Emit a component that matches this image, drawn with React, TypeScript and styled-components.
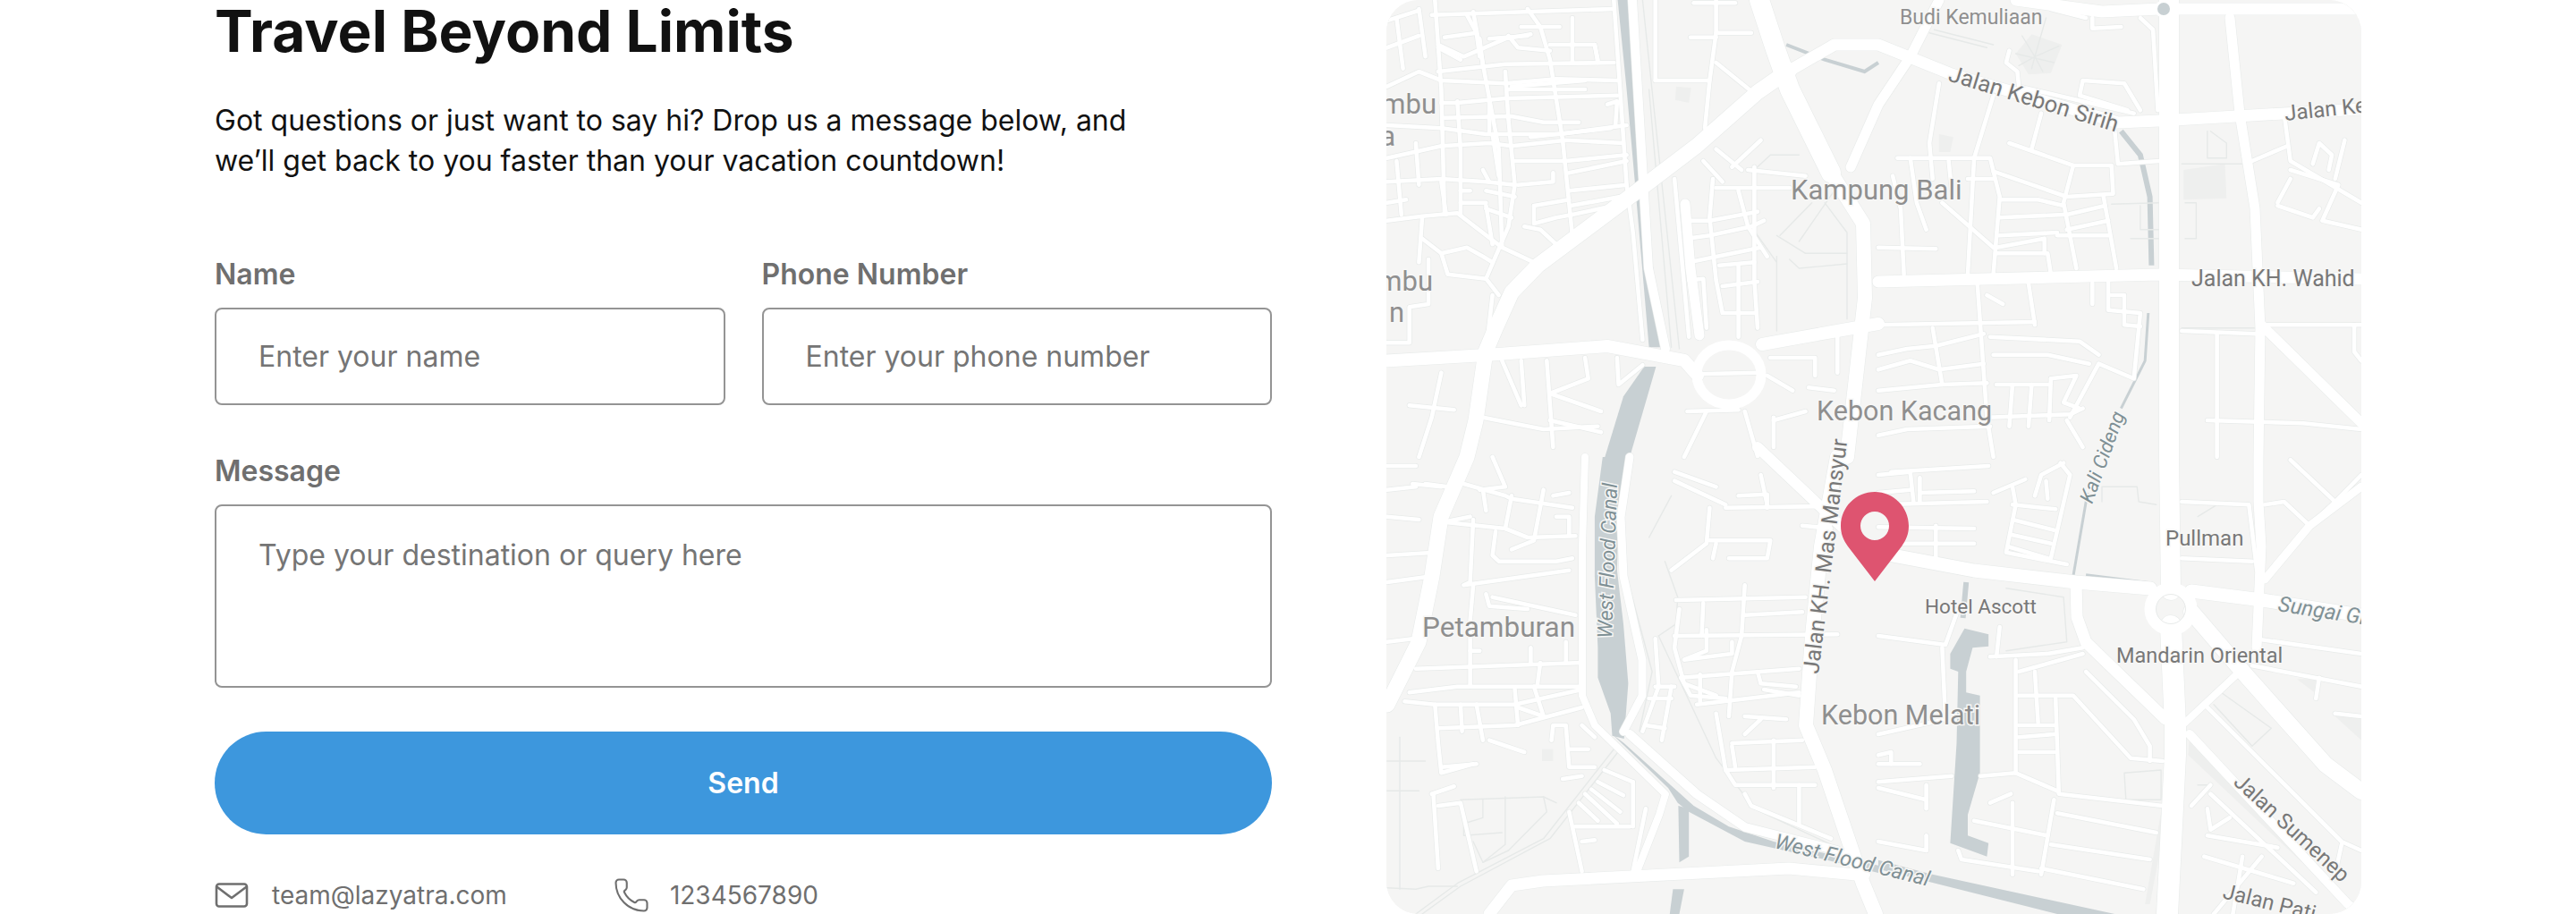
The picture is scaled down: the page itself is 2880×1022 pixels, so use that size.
import React from 'react';
import styled, { createGlobalStyle } from 'styled-components';
import { Phone } from 'lucide-react';

const GlobalStyle = createGlobalStyle`
  html, body {
    margin: 0;
    padding: 0;
    background: #ffffff;
    overflow: hidden;
  }
  * {
    box-sizing: border-box;
  }
`;

const Page = styled.main`
  width: 2880px;
  height: 1022px;
  padding-left: 240px;
  display: grid;
  grid-template-columns: 1182px 1090px;
  column-gap: 128px;
  font-family: Inter, 'Liberation Sans', sans-serif;
`;

const FormColumn = styled.section`
  padding-top: 3px;
  display: flex;
  flex-direction: column;
`;

const Title = styled.h1`
  margin: 0;
  font-size: 64px;
  line-height: 64px;
  font-weight: 700;
  color: #111111;
`;

const Intro = styled.p`
  margin: 45px 0 0;
  font-size: 32px;
  line-height: 45px;
  font-weight: 400;
  color: #111111;
`;

const NameRow = styled.div`
  margin-top: 85px;
  display: grid;
  grid-template-columns: 1fr 1fr;
  column-gap: 41px;
`;

const Field = styled.label<{ $gap?: number }>`
  display: flex;
  flex-direction: column;
  row-gap: 17px;
  margin-top: ${(p) => p.$gap ?? 0}px;
`;

const FieldLabel = styled.span`
  font-size: 32px;
  line-height: 40px;
  font-weight: 600;
  color: #6f6f6f;
`;

const TextInput = styled.input`
  width: 100%;
  height: 109px;
  padding: 0 47px;
  border: 2px solid #949494;
  border-radius: 8px;
  background: #ffffff;
  font: 400 32px Inter, 'Liberation Sans', sans-serif;
  &::placeholder {
    color: #757575;
    opacity: 1;
  }
`;

const MessageInput = styled.textarea`
  display: block;
  width: 100%;
  height: 205px;
  padding: 35px 47px;
  border: 2px solid #949494;
  border-radius: 8px;
  background: #ffffff;
  resize: none;
  font: 400 32px/40px Inter, 'Liberation Sans', sans-serif;
  &::placeholder {
    color: #757575;
    opacity: 1;
  }
`;

const SendButton = styled.button`
  margin-top: 49px;
  height: 115px;
  border: 0;
  border-radius: 58px;
  background: #3d97dd;
  color: #ffffff;
  font: 600 32px Inter, 'Liberation Sans', sans-serif;
`;

const ContactRow = styled.div`
  margin-top: 50px;
  display: flex;
  align-items: center;
  column-gap: 118px;
  color: #6f6f6f;
`;

const ContactItem = styled.div<{ $gap: number }>`
  display: flex;
  align-items: center;
  column-gap: ${(p) => p.$gap}px;
  height: 36px;
  font-size: 28px;
  line-height: 36px;
`;

const MailGlyph = styled.svg`
  width: 38px;
  height: 28px;
  flex: none;
`;

const MapFrame = styled.section`
  position: relative;
  width: 1090px;
  height: 1022px;
  border-radius: 36px;
  overflow: hidden;
  background: #f5f5f4;
`;

const MapCanvas = styled.svg`
  display: block;
  width: 1090px;
  height: 1022px;
`;

const MapLabel = styled.text<{ $tone: string; $italic?: boolean }>`
  font-family: Roboto, 'Noto Sans', sans-serif;
  fill: ${(p) => p.$tone};
  font-style: ${(p) => (p.$italic ? 'italic' : 'normal')};
  stroke: #f7f7f6;
  stroke-width: 3px;
  paint-order: stroke;
`;

const PinMark = styled.svg`
  position: absolute;
  left: 508px;
  top: 550px;
  width: 76px;
  height: 100px;
`;

type PanelKey = 'a' | 'b' | 'c' | 'd';

// road data is read off four quarter crops of the map, so each list keeps its crop's scale
const panels: Record<PanelKey, [number, number]> = {
  a: [1540, 0],
  b: [2100, 0],
  c: [1540, 511],
  d: [2100, 511],
};

const project = (panel: PanelKey, pts: number[]) => {
  const [ox, oy] = panels[panel];
  const out: string[] = [];
  for (let i = 0; i < pts.length; i += 2) {
    out.push(`${(ox + pts[i] / 2.8).toFixed(1)},${(oy + pts[i + 1] / 3).toFixed(1)}`);
  }
  return out;
};

const toPath = (panel: PanelKey, pts: number[]) => 'M' + project(panel, pts).join('L');
const pagePath = (pts: number[]) => {
  const out: string[] = [];
  for (let i = 0; i < pts.length; i += 2) out.push(`${pts[i]},${pts[i + 1]}`);
  return 'M' + out.join('L');
};

const water: [PanelKey, number[]][] = [
  ['a', [752, 0, 790, 0, 815, 300, 838, 600, 885, 1165, 850, 1165, 805, 600, 780, 300]],
  ['a', [835, 1230, 872, 1230, 845, 1330, 790, 1533, 712, 1533, 770, 1330]],
  ['c', [705, 0, 782, 0, 755, 190, 750, 380, 770, 560, 785, 760, 772, 945, 735, 935, 730, 860, 690, 740, 690, 640, 680, 400, 680, 200]],
  ['c', [735, 930, 772, 960, 990, 1170, 1100, 1240, 1240, 1290, 1568, 1370, 1568, 1395, 1400, 1350, 1150, 1290, 975, 1190, 940, 1160, 910, 1110]],
  ['c', [942, 1170, 975, 1180, 975, 1340, 945, 1360]],
  ['c', [925, 1450, 960, 1450, 945, 1533, 915, 1533]],
  ['d', [0, 1352, 160, 1398, 740, 1533, 560, 1533, 0, 1382]],
  ['d', [270, 575, 345, 595, 345, 635, 295, 640, 275, 720, 275, 790, 318, 800, 318, 1060, 280, 1200, 280, 1270, 345, 1295, 340, 1340, 225, 1295, 245, 960, 250, 720, 225, 710, 225, 660]],
];

const streams: [PanelKey, number, number[]][] = [
  ['b', 6, [760, 440, 820, 520, 850, 660, 855, 890]],
  ['b', 3, [845, 1050, 835, 1210, 760, 1370]],
  ['d', 3, [655, 120, 610, 400]],
  ['a', 4, [1280, 150, 1400, 200, 1525, 240, 1568, 210]],
  ['d', 3, [650, 395, 850, 422]],
  ['d', 3, [1000, 458, 1180, 482]],
  ['d', 6, [275, 420, 265, 540]],
];

const shades: [PanelKey, number[]][] = [
  ['a', [935, 290, 982, 295, 975, 345, 932, 335]],
  ['b', [955, 570, 1085, 550, 1090, 665, 955, 670]],
  ['b', [430, 180, 480, 115, 575, 150, 540, 245, 470, 250]],
  ['b', [190, 450, 235, 460, 225, 510, 190, 510]],
  ['c', [515, 980, 550, 980, 550, 1020, 515, 1020]],
  ['d', [1310, 745, 1370, 745, 1365, 790]],
  ['d', [1430, 870, 1512, 870, 1512, 950]],
  ['d', [975, 935, 1470, 1480, 1475, 1510, 970, 1000]],
  ['d', [885, 1190, 905, 1190, 850, 1500, 835, 1500]],
];

// [width, ...x,y in page pixels]
const majors: number[][] = [
  [17, 2001, 78, 1965, 103, 1897, 163, 1826, 217, 1719, 297, 1690, 327, 1672, 367, 1661, 393, 1650, 470, 1640, 511, 1611, 578, 1601, 644, 1586, 718, 1551, 788],
  [14, 1540, 404, 1661, 397, 1797, 387, 1883, 403, 1898, 420],
  [14, 1970, 385, 2054, 370, 2100, 362],
  [22, 1967, 0, 1985, 55, 2001, 100, 2047, 193],
  [16, 2047, 193, 2083, 250, 2085, 333, 2065, 511, 2054, 511, 2036, 611, 2026, 711, 2019, 811, 2040, 861, 2083, 988, 2097, 1022],
  [13, 2004, 77, 2051, 50, 2100, 50, 2182, 83, 2368, 137, 2414, 135, 2500, 130, 2640, 122],
  [11, 2168, 0, 2136, 63, 2100, 117, 2069, 187],
  [13, 2254, 0, 2350, 13, 2414, 10, 2640, 10],
  [22, 2425, 0, 2425, 511, 2427, 660],
  [24, 2427, 700, 2432, 811, 2432, 844, 2423, 1022],
  [11, 2493, 20, 2504, 127, 2521, 233, 2527, 367, 2525, 511, 2525, 561, 2528, 611, 2523, 724],
  [13, 2100, 315, 2414, 307, 2640, 312],
  [11, 2528, 363, 2640, 473],
  [15, 2100, 618, 2207, 638, 2321, 651, 2404, 658],
  [15, 2450, 661, 2529, 671, 2640, 688],
  [12, 1965, 500, 2058, 588, 2100, 618],
  [13, 2321, 651, 2322, 690, 2332, 718, 2421, 804],
  [18, 2450, 684, 2510, 754, 2600, 855, 2640, 885],
  [8, 2504, 751, 2443, 808],
  [9, 2532, 648, 2582, 588, 2640, 544],
  [10, 2448, 821, 2625, 1011, 2640, 1022],
  [13, 1665, 1022, 1690, 990, 1725, 985, 2000, 971, 2075, 978],
  [8, 1772, 511, 1769, 611, 1769, 778, 1783, 811, 1862, 888, 1855, 911, 1830, 975],
  [9, 1822, 511, 1812, 578, 1815, 644, 1836, 738, 1836, 778, 1815, 818],
  [10, 1822, 821, 1897, 888, 1951, 925, 2054, 951, 2086, 978],
  [10, 1825, 0, 1843, 300, 1862, 390],
  [11, 1884, 228, 1890, 300, 1900, 375],
];

const minors: [PanelKey, number[][]][] = [
  ['a', [
    [28, 70, 130, 35], [170, 50, 740, 30], [190, 240, 400, 215, 740, 210], [30, 290, 130, 240, 200, 270, 400, 280, 560, 265, 750, 270],
    [410, 300, 650, 300], [250, 345, 400, 330, 750, 320], [30, 420, 200, 430, 340, 450, 570, 450, 780, 420], [210, 395, 420, 390, 520, 410, 630, 410],
    [30, 530, 200, 490, 350, 480, 420, 490, 590, 470, 770, 480], [430, 540, 590, 540, 780, 520], [600, 580, 780, 540], [440, 620, 550, 610, 550, 580],
    [30, 610, 200, 600, 340, 610, 430, 620], [600, 640, 780, 620], [605, 690, 760, 660], [490, 690, 600, 670], [610, 720, 740, 690],
    [30, 740, 140, 725, 250, 715, 390, 830, 490, 880], [200, 850, 280, 830, 330, 860, 360, 880], [140, 800, 200, 850, 220, 920, 340, 935, 380, 990],
    [490, 690, 490, 750, 560, 730, 610, 720], [460, 760, 510, 770, 560, 820], [180, 0, 200, 300, 210, 720], [300, 40, 350, 330, 380, 500, 390, 830],
    [400, 240, 410, 400, 430, 620, 410, 760, 340, 935], [470, 30, 510, 90, 540, 200, 580, 470, 610, 790], [740, 0, 780, 620, 800, 780, 830, 1140],
    [120, 480, 130, 620], [60, 540, 75, 720], [60, 60, 80, 230], [250, 340, 260, 500, 260, 720], [130, 30, 150, 190], [140, 730, 130, 880],
    [30, 160, 130, 120], [190, 150, 270, 190, 400, 130, 480, 115], [320, 130, 330, 220], [610, 60, 610, 205], [680, 150, 690, 210], [190, 160, 260, 200],
    [210, 125, 310, 110], [280, 50, 310, 110, 320, 190], [350, 130, 470, 120], [410, 120, 440, 160, 540, 170], [540, 150, 680, 150, 690, 200], [450, 90, 570, 90], [420, 290, 650, 270], [200, 345, 250, 345],
    [350, 340, 350, 440], [480, 460, 730, 430], [720, 350, 750, 340, 745, 420], [360, 450, 380, 590], [330, 570, 350, 610], [30, 680, 90, 670], [200, 610, 215, 720], [260, 640, 290, 640], [340, 640, 430, 660],
    [340, 700, 420, 730], [260, 680, 340, 680], [340, 690, 360, 820], [360, 990, 340, 1180], [30, 1150, 100, 1150, 100, 1030, 160, 1020, 160, 870],
    [870, 270, 1040, 270, 1060, 110, 1170, 110], [870, 0, 870, 270], [1040, 270, 1025, 430], [1060, 210, 1175, 310], [980, 125, 1060, 125], [990, 10, 1120, 10], [1060, 0, 1060, 110],
    [930, 600, 975, 1130], [960, 740, 1040, 740, 1190, 710], [970, 800, 1040, 790, 1170, 760, 1210, 740], [975, 880, 1200, 830], [1050, 600, 1040, 730, 1060, 940, 1080, 1050, 1180, 1050],
    [1130, 640, 1160, 760, 1220, 860], [1020, 540, 1080, 610], [1060, 500, 1140, 570], [1110, 560, 1200, 470], [1180, 560, 1180, 940, 1190, 1100], [1080, 960, 1190, 945],
    [975, 940, 1020, 935, 1030, 1100], [1130, 890, 1130, 1130], [1070, 890, 1180, 880], [1160, 570, 1340, 590], [1060, 630, 1290, 630], [1000, 1255, 1190, 1250],
    [390, 1210, 450, 1360], [450, 1210, 460, 1360], [530, 1210, 550, 1500], [650, 1200, 660, 1270, 540, 1320, 700, 1380], [750, 1200, 755, 1290, 830, 1225], [330, 1400, 520, 1440, 690, 1430],
    [100, 1360, 240, 1375], [540, 1410, 700, 1450], [970, 1380, 1130, 1375], [1150, 1380, 1190, 1530], [1230, 1200, 1370, 1200, 1370, 1260], [1220, 1260, 1300, 1310],
    [1350, 1300, 1430, 1310], [1240, 1400, 1240, 1500], [1030, 1380, 960, 1533], [1440, 1130, 1440, 1250], [200, 1250, 170, 1400, 130, 1533], [1240, 1410, 1340, 1380],
  ]],
  ['b', [
    [190, 280, 160, 480, 170, 600], [360, 320, 300, 530, 280, 920], [510, 380, 480, 500], [410, 480, 610, 555, 730, 555, 735, 650, 590, 660, 360, 575], [610, 555, 580, 680, 620, 900],
    [705, 660, 745, 900], [590, 720, 710, 690], [590, 770, 720, 740], [560, 790, 720, 790], [60, 530, 350, 530, 380, 660, 360, 920], [45, 590, 70, 700, 80, 920], [100, 530, 120, 680, 150, 770],
    [220, 540, 230, 640], [280, 600, 360, 600], [380, 670, 500, 670, 580, 690], [380, 730, 580, 720], [380, 790, 560, 780], [370, 850, 530, 850, 540, 920], [370, 830, 520, 800, 520, 850],
    [200, 680, 360, 830], [0, 830, 180, 835], [310, 950, 340, 1400, 360, 1533], [0, 1090, 490, 1080], [470, 950, 490, 1090], [720, 940, 720, 1040, 820, 1050, 800, 1270, 690, 1220, 600, 1400],
    [350, 1130, 630, 1145, 690, 1190], [360, 1190, 530, 1190, 660, 1220], [0, 1190, 90, 1170, 180, 1160, 330, 1120], [0, 1240, 100, 1210, 190, 1240, 330, 1220], [0, 1310, 200, 1290, 340, 1285],
    [200, 1290, 170, 1100], [540, 1270, 620, 1260, 580, 1350, 630, 1370], [420, 1290, 410, 1430], [480, 1290, 470, 1430], [540, 1270, 535, 1410], [340, 1400, 600, 1390, 640, 1370],
    [0, 1460, 90, 1440, 350, 1430], [370, 1290, 530, 1290], [590, 1410, 640, 1500], [670, 950, 670, 1020],
    [950, 1110, 1180, 1120], [1060, 1120, 1060, 1533], [1210, 1090, 1512, 1090], [1030, 1410, 1330, 1420, 1512, 1440], [1270, 380, 1290, 540, 1512, 680], [1290, 570, 1440, 620, 1390, 740, 1512, 770],
    [1170, 540, 1280, 490], [1360, 550, 1380, 480, 1420, 520, 1410, 570], [1460, 470, 1430, 600], [1250, 680, 1290, 600], [1250, 690, 1360, 730, 1380, 700], [1490, 1090, 1490, 1180, 1512, 1210],
    [540, 30, 650, 60], [670, 60, 670, 95, 760, 90], [820, 60, 860, 100, 875, 370], [780, 370, 630, 320, 640, 270, 770, 280, 820, 370], [410, 170, 400, 210, 435, 240, 440, 290, 800, 380],
    [740, 440, 750, 550, 880, 540], [340, 990, 390, 1020], [730, 990, 770, 990, 770, 1090, 820, 1095],
  ]],
  ['c', [
    [120, 100, 30, 110], [270, 90, 400, 130, 420, 140, 610, 170], [360, 0, 400, 100, 320, 110], [220, 220, 400, 240, 470, 270, 620, 265], [30, 330, 180, 320], [200, 220, 290, 200],
    [300, 210, 290, 420, 270, 430, 600, 380], [370, 250, 360, 330, 380, 350, 560, 350, 610, 340], [330, 110, 340, 180], [520, 110, 490, 280, 420, 310], [30, 420, 170, 400], [300, 430, 290, 550, 290, 770],
    [360, 470, 620, 530], [340, 460, 350, 500, 470, 510], [120, 710, 640, 690], [510, 690, 500, 770, 640, 770], [100, 790, 250, 770, 500, 770], [85, 820, 180, 830, 320, 830, 430, 830, 640, 780],
    [180, 830, 190, 960, 200, 1060, 300, 1030], [260, 830, 265, 920], [310, 830, 330, 950], [190, 910, 430, 900, 640, 840], [430, 780, 440, 900], [490, 770, 520, 870], [350, 950, 460, 990],
    [545, 950, 550, 900, 590, 900, 600, 1040, 680, 1040], [600, 980, 660, 980], [640, 900, 680, 940], [110, 90, 200, 100], [550, 130, 600, 120], [30, 620, 110, 610], [480, 640, 480, 690], [590, 620, 590, 690], [290, 650, 320, 650],
    [150, 90, 220, 100], [420, 130, 400, 240], [30, 200, 130, 210], [560, 200, 600, 200, 600, 260], [440, 840, 520, 870],
    [930, 50, 1060, 100], [930, 80, 1090, 160], [1090, 170, 1400, 165], [1040, 170, 1030, 290, 920, 380], [1040, 280, 1230, 280, 1220, 340, 1100, 340], [1060, 290, 1050, 340], [1130, 130, 1220, 125, 1220, 170],
    [1200, 60, 1220, 160], [935, 480, 1340, 470], [1020, 490, 1015, 600], [945, 510, 930, 640, 960, 760, 1060, 800], [1150, 430, 1140, 600, 1110, 720, 1100, 870], [1150, 530, 1330, 520], [930, 600, 1440, 595],
    [1030, 580, 1030, 650, 960, 680, 1110, 660, 1110, 620], [950, 740, 1320, 710], [1090, 810, 980, 800, 950, 740], [1000, 830, 1320, 790], [1010, 730, 1010, 820], [1190, 720, 1200, 760, 1310, 770], [1210, 780, 1320, 800],
    [1060, 860, 1090, 1050, 1120, 1100, 1370, 1100], [1090, 1050, 1370, 1040], [1240, 950, 1240, 1110], [1110, 960, 1330, 950], [1110, 970, 1120, 1040], [1150, 870, 1280, 880], [1150, 930, 1200, 880],
    [1150, 1130, 1170, 1170, 1330, 1240, 1420, 1280], [1320, 1100, 1320, 1230], [870, 610, 880, 770, 830, 920], [870, 770, 930, 770], [920, 770, 890, 950], [850, 810, 920, 810], [840, 900, 900, 910],
    [170, 1130, 240, 1105], [175, 1130, 190, 1380], [190, 1170, 260, 1160, 310, 1390], [600, 1190, 640, 1390], [620, 1240, 790, 1240], [640, 1290, 680, 1285], [200, 1040, 310, 1030], [580, 1080, 640, 1070],
    [630, 1160, 690, 1220], [650, 1130, 750, 1230], [670, 1115, 760, 1190], [690, 1090, 770, 1135], [710, 1050, 800, 1090], [800, 1090, 800, 1240], [840, 1180, 800, 1390],
    [20, 30, 120, 30], [1330, 230, 1420, 240],
  ]],
  ['d', [
    [0, 160, 340, 150], [0, 290, 300, 290], [130, 70, 130, 150], [180, 230, 180, 340], [0, 235, 300, 240], [40, 50, 345, 30], [0, 60, 100, 50, 110, 150], [0, 120, 100, 110], [130, 120, 300, 115],
    [360, 120, 460, 75], [490, 130, 510, 60, 580, 20], [530, 140, 525, 80], [570, 20, 600, 60, 540, 340], [420, 100, 430, 160, 400, 320, 590, 360], [420, 160, 555, 175], [420, 210, 550, 245], [415, 260, 540, 290], [405, 300, 530, 340],
    [950, 150, 1160, 160, 1185, 380], [950, 340, 1170, 350], [1210, 160, 1270, 150, 1350, 230], [1290, 10, 1430, 150, 1350, 230], [1430, 150, 1512, 60],
    [1180, 610, 1512, 660], [1170, 700, 1512, 770], [1380, 740, 1370, 810], [1430, 860, 1512, 870], [0, 600, 210, 630, 250, 510], [200, 640, 210, 880, 0, 930], [350, 670, 530, 660, 640, 640],
    [430, 680, 430, 1060], [490, 720, 500, 890], [440, 720, 640, 660], [650, 720, 800, 880, 850, 970, 850, 1020], [440, 800, 610, 800, 790, 1010, 890, 1020], [440, 900, 550, 900], [440, 940, 550, 930], [440, 990, 550, 990],
    [555, 810, 565, 1130, 890, 1170], [320, 1070, 430, 1060, 560, 1120], [300, 1220, 530, 1270], [560, 1195, 870, 1260], [540, 1300, 850, 1350], [510, 1380, 830, 1450], [550, 1150, 510, 1400], [0, 1090, 230, 1070], [0, 1110, 150, 1150],
    [250, 1320, 260, 1350, 500, 1390], [0, 1290, 150, 1320], [0, 1030, 130, 1030], [370, 670, 380, 570], [1030, 840, 1450, 1290, 1512, 1320], [980, 1170, 1040, 1100], [1040, 1130, 1370, 1460], [1030, 1180, 1040, 1250, 1100, 1210],
    [1020, 1340, 1300, 1430], [1140, 1340, 1110, 1533], [1200, 1340, 1050, 1533], [1030, 1270, 1250, 1310], [1450, 1300, 1430, 1400], [350, 1160, 415, 1130], [150, 1100, 150, 1180], [150, 1270, 150, 1320], [420, 1160, 420, 1400],
    [0, 1000, 40, 990, 40, 1030],
  ]],
];

const thins: [PanelKey, number[][]][] = [
  ['a', [[830, 0, 945, 1170], [850, 300, 920, 1165], [1250, 860, 1250, 1110], [1170, 760, 1250, 880], [1250, 790, 1340, 850, 1470, 850], [1290, 870, 1320, 900, 1470, 885], [1400, 680, 1470, 780, 1470, 1070], [1260, 790, 1360, 680], [1320, 810, 1430, 640], [1180, 570, 1230, 520, 1320, 520]]],
  ['b', [[160, 110, 340, 160], [175, 100, 360, 150], [450, 120, 490, 190, 565, 155], [430, 180, 550, 210], [490, 190, 480, 230], [490, 190, 515, 240], [490, 190, 440, 220], [525, 60, 490, 190], [1040, 440, 1090, 480, 1090, 530, 1030, 530, 1030, 440], [950, 550, 1140, 550], [730, 685, 880, 680], [820, 690, 820, 770, 880, 770], [960, 680, 995, 680, 995, 800, 960, 800], [790, 800, 880, 800], [950, 1100, 1180, 1100]]],
  ['c', [[880, 600, 1060, 1010, 1180, 1180, 1420, 1300], [850, 270, 920, 130], [900, 350, 940, 470, 935, 560, 880, 600], [780, 400, 860, 720, 820, 920], [740, 980, 520, 1280, 250, 1430, 120, 1533], [760, 980, 540, 1280, 260, 1440, 140, 1533], [70, 940, 70, 1450], [30, 1020, 150, 1020], [30, 1120, 130, 1120], [30, 1445, 120, 1450, 160, 1440, 250, 1440], [260, 1150, 520, 1140, 560, 1160], [330, 1150, 330, 1210, 270, 1230, 270, 1270, 390, 1260], [400, 1140, 400, 1300, 330, 1360], [520, 1140, 530, 1190, 410, 1320], [300, 1290, 330, 1360, 410, 1320]]],
  ['d', [[700, 150, 700, 100, 810, 100, 815, 150, 870, 160], [1060, 780, 1230, 910, 1170, 970, 1050, 830], [770, 1060, 885, 1050, 885, 1150, 775, 1150, 770, 1060], [1000, 1100, 1030, 1100], [400, 440, 580, 470, 590, 620, 400, 650], [1000, 200, 1060, 160]]],
];

type Label = {
  text: string;
  x: number;
  y: number;
  size: number;
  tone: string;
  rotate?: number;
  italic?: boolean;
  anchor?: 'start' | 'end';
};

const placeTone = '#8f8f8f';
const roadTone = '#787878';
const waterTone = '#7f9095';

const labels: Label[] = [
  { text: 'Budi Kemuliaan', x: 2124, y: 27, size: 23, tone: placeTone },
  { text: 'Jalan Kebon Sirih', x: 2177, y: 90, size: 25.5, tone: roadTone, rotate: 17 },
  { text: 'Jalan Kebon', x: 2555, y: 135, size: 24, tone: roadTone, rotate: -6 },
  { text: 'mbu', x: 1606, y: 127, size: 31, tone: placeTone, anchor: 'end' },
  { text: 'a', x: 1560, y: 163, size: 31, tone: placeTone, anchor: 'end' },
  { text: 'mbu', x: 1602, y: 325, size: 31, tone: placeTone, anchor: 'end' },
  { text: 'n', x: 1570, y: 360, size: 31, tone: placeTone, anchor: 'end' },
  { text: 'Kampung Bali', x: 2002, y: 223, size: 31, tone: placeTone },
  { text: 'Kebon Kacang', x: 2031, y: 470, size: 30.5, tone: placeTone },
  { text: 'Jalan KH. Wahid', x: 2450, y: 320, size: 25, tone: roadTone },
  { text: 'Petamburan', x: 1590, y: 712, size: 31.5, tone: placeTone },
  { text: 'West Flood Canal', x: 1802, y: 714, size: 23, tone: waterTone, rotate: -88, italic: true },
  { text: 'Jalan KH. Mas Mansyur', x: 2033, y: 754, size: 25, tone: roadTone, rotate: -83 },
  { text: 'Kali Cideng', x: 2339, y: 564, size: 22, tone: waterTone, rotate: -70, italic: true },
  { text: 'Pullman', x: 2421, y: 610, size: 24, tone: roadTone },
  { text: 'Hotel Ascott', x: 2152, y: 686, size: 22.5, tone: roadTone },
  { text: 'Sungai Grogol', x: 2546, y: 683, size: 24, tone: waterTone, rotate: 9, italic: true },
  { text: 'Mandarin Oriental', x: 2366, y: 741, size: 23.5, tone: roadTone },
  { text: 'Kebon Melati', x: 2036, y: 810, size: 30.5, tone: placeTone },
  { text: 'West Flood Canal', x: 1983, y: 948, size: 23.5, tone: waterTone, rotate: 14, italic: true },
  { text: 'Jalan Sumenep', x: 2496, y: 876, size: 24, tone: roadTone, rotate: 42.5 },
  { text: 'Jalan Pati', x: 2484, y: 1004, size: 24, tone: roadTone, rotate: 14 },
];

const CityMap = () => {
  const majorPaths = majors.map(([w, ...pts]) => ({ w, d: pagePath(pts) }));
  const minorPaths = minors.flatMap(([panel, list]) => list.map((pts) => toPath(panel, pts)));
  const thinPaths = thins.flatMap(([panel, list]) => list.map((pts) => toPath(panel, pts)));

  return (
    <MapCanvas viewBox="1550 0 1090 1022">
      <rect x="1550" y="0" width="1090" height="1022" fill="#f5f5f4" />
      {shades.map(([panel, pts], i) => (
        <polygon key={i} points={project(panel, pts).join(' ')} fill="#eeefee" />
      ))}
      {water.map(([panel, pts], i) => (
        <polygon key={i} points={project(panel, pts).join(' ')} fill="#c8d0d3" />
      ))}
      {streams.map(([panel, w, pts], i) => (
        <path key={i} d={toPath(panel, pts)} fill="none" stroke="#c8d0d3" strokeWidth={w} />
      ))}
      <g fill="none" strokeLinecap="round" strokeLinejoin="round">
        {thinPaths.map((d, i) => (
          <path key={i} d={d} stroke="#e6e9e8" strokeWidth="1.4" />
        ))}
        {minorPaths.map((d, i) => (
          <path key={i} d={d} stroke="#e8ebea" strokeWidth="6" />
        ))}
        {majorPaths.map((r, i) => (
          <path key={i} d={r.d} stroke="#e8ebea" strokeWidth={r.w + 1.2} />
        ))}
        {minorPaths.map((d, i) => (
          <path key={i} d={d} stroke="#ffffff" strokeWidth="4.6" />
        ))}
        {majorPaths.map((r, i) => (
          <path key={i} d={r.d} stroke="#ffffff" strokeWidth={r.w} />
        ))}
        <ellipse cx="1933" cy="419" rx="36" ry="33" stroke="#ffffff" strokeWidth="11" />
        <circle cx="2427" cy="681" r="23" stroke="#ffffff" strokeWidth="13" />
        <circle cx="2427" cy="681" r="16.5" stroke="#e8ebea" strokeWidth="1" />
      </g>
      <circle cx="2419" cy="10" r="10" fill="#ffffff" />
      <circle cx="2419" cy="10" r="7" fill="#c8d0d3" />
      {labels.map((l) => (
        <MapLabel
          key={`${l.text}-${l.x}`}
          x={l.x}
          y={l.y}
          fontSize={l.size}
          textAnchor={l.anchor ?? 'start'}
          transform={l.rotate ? `rotate(${l.rotate} ${l.x} ${l.y})` : undefined}
          $tone={l.tone}
          $italic={l.italic}
        >
          {l.text}
        </MapLabel>
      ))}
    </MapCanvas>
  );
};

const App = () => (
  <>
    <GlobalStyle />
    <Page>
      <FormColumn>
        <Title>Travel Beyond Limits</Title>
        <Intro>
          Got questions or just want to say hi? Drop us a message below, and
          <br />
          we’ll get back to you faster than your vacation countdown!
        </Intro>
        <NameRow>
          <Field>
            <FieldLabel>Name</FieldLabel>
            <TextInput placeholder="Enter your name" />
          </Field>
          <Field>
            <FieldLabel>Phone Number</FieldLabel>
            <TextInput placeholder="Enter your phone number" />
          </Field>
        </NameRow>
        <Field $gap={54}>
          <FieldLabel>Message</FieldLabel>
          <MessageInput placeholder="Type your destination or query here" />
        </Field>
        <SendButton type="button">Send</SendButton>
        <ContactRow>
          <ContactItem $gap={26}>
            <MailGlyph viewBox="0 0 38 28" fill="none" stroke="#6f6f6f" strokeWidth="2.6" strokeLinecap="round" strokeLinejoin="round">
              <rect x="2" y="1.5" width="34" height="25" rx="3" />
              <path d="M3 5l16 12L35 5" />
            </MailGlyph>
            team@lazyatra.com
          </ContactItem>
          <ContactItem $gap={22}>
            <Phone size={42} strokeWidth={1.2} color="#6f6f6f" />
            1234567890
          </ContactItem>
        </ContactRow>
      </FormColumn>
      <MapFrame>
        <CityMap />
        <PinMark viewBox="0 0 76 100">
          <path
            fillRule="evenodd"
            fill="#de5470"
            d="M38 0C17 0 0 17 0 38c0 9 3 16 8 23l30 39 30-39c5-7 8-14 8-23C76 17 59 0 38 0zM38 22a16 16 0 1 1 0 32a16 16 0 1 1 0-32z"
          />
        </PinMark>
      </MapFrame>
    </Page>
  </>
);

export default App;
